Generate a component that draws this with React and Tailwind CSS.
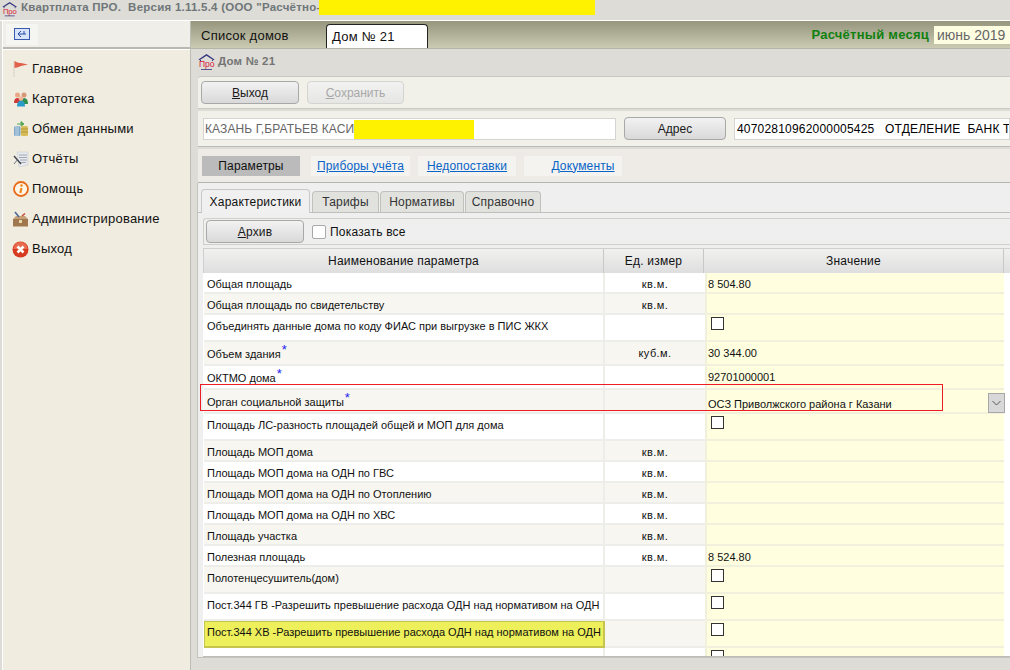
const font = { };
function Logo() {
  return (
    <svg width="17" height="18" viewBox="0 0 17 18" className="shrink-0">
      <path d="M0.5 6.5 L8.5 1 L16.5 6.5 L15.5 7.2 L8.5 2.8 L1.5 7.2 Z" fill="#33337f" />
      <path d="M2.5 7 V8 M14.5 7 V8" stroke="#33337f" />
      <text x="1" y="14" fontSize="8.5" fill="#d8203a" fontFamily="Liberation Sans, sans-serif">Про</text>
      <path d="M3 16.5 H14" stroke="#33337f" strokeWidth="0.8" />
    </svg>
  );
}
function Flag() {
  return (
    <svg width="16" height="18" viewBox="0 0 16 18">
      <path d="M1 1 V17" stroke="#d9cfc0" strokeWidth="1" />
      <path d="M1.5 1 Q5 3.5 8 3 L15 4.5 L8 6 Q5 7.5 1.5 8 Z" fill="#e0604a" />
    </svg>
  );
}
function People() {
  return (
    <svg width="16" height="16" viewBox="0 0 16 16">
      <circle cx="4.5" cy="4" r="2.5" fill="#e8a888" />
      <path d="M1 12 Q1 7 4.5 7 Q8 7 8 12 Z" fill="#d03838" />
      <circle cx="11" cy="4" r="2.5" fill="#d89878" />
      <path d="M7 13 Q7 7 11 7 Q15 7 15 13 Z" fill="#2f8f4f" />
      <path d="M4 15.5 Q4 9.5 8 9.5 Q12 9.5 12 15.5 Z" fill="#2a9ac8" />
      <circle cx="8" cy="7.5" r="2.3" fill="#f0b898" />
    </svg>
  );
}
function Exchange() {
  return (
    <svg width="16" height="16" viewBox="0 0 16 16">
      <rect x="1" y="5" width="6.5" height="10" rx="1.5" fill="#7fa8c8" />
      <path d="M3 5 V15 M5 5 V15" stroke="#c7dbe8" />
      <rect x="8" y="5" width="7" height="10" rx="1.5" fill="#d8bc58" />
      <path d="M8 8 H15 M8 11 H15" stroke="#a58a30" strokeWidth="0.7" />
      <path d="M8 0.5 L11 3 L8 5 Z M4 3 H8" fill="#58a858" stroke="#58a858" />
    </svg>
  );
}
function Reports() {
  return (
    <svg width="16" height="17" viewBox="0 0 16 17">
      <path d="M4 1 H15 V14 L6 16 Z" fill="#e8eaee" stroke="#c0c4cc" strokeWidth="0.5" />
      <path d="M6 4 H14 M6 6.5 H14 M7 9 H14 M7 11.5 H13" stroke="#8c94a4" strokeWidth="0.8" />
      <path d="M1 5 L8 13" stroke="#3c4048" strokeWidth="1.4" />
      <path d="M1 13 L5 8" stroke="#60687a" strokeWidth="0.9" />
    </svg>
  );
}
function Help() {
  return (
    <svg width="16" height="16" viewBox="0 0 16 16">
      <circle cx="8" cy="8" r="7" fill="#fff6e8" stroke="#e86a18" strokeWidth="1.8" />
      <circle cx="8.5" cy="4.5" r="1.3" fill="#f0881c" />
      <path d="M8.5 7 L7.3 12" stroke="#f0881c" strokeWidth="2.2" />
    </svg>
  );
}
function Admin() {
  return (
    <svg width="17" height="17" viewBox="0 0 17 17">
      <path d="M1 8 H16 V15.5 H1 Z" fill="#a07850" />
      <path d="M1 8 L4 5 H13 L16 8 Z" fill="#c8a078" />
      <rect x="7" y="9" width="3" height="3" fill="#e8d8a8" />
      <path d="M3 1 L7 6" stroke="#4a6a98" strokeWidth="1.6" />
      <path d="M10 5 L13 2.5" stroke="#c84838" strokeWidth="1.6" />
    </svg>
  );
}
function Quit() {
  return (
    <svg width="17" height="17" viewBox="0 0 17 17">
      <circle cx="8.5" cy="8.5" r="8" fill="#d83a20" />
      <path d="M1.5 8 A7 7 0 0 1 15.5 8 Z" fill="#e86a50" />
      <path d="M5.5 5.5 L11.5 11.5 M11.5 5.5 L5.5 11.5" stroke="#fff" strokeWidth="2.6" />
    </svg>
  );
}
const menu = [
  [Flag, "Главное"],
  [People, "Картотека"],
  [Exchange, "Обмен данными"],
  [Reports, "Отчёты"],
  [Help, "Помощь"],
  [Admin, "Администрирование"],
  [Quit, "Выход"],
];
function Btn({ children, disabled, w }) {
  return (
    <div className={`h-[23px] rounded-[4px] border flex items-center justify-center text-[12px] bg-gradient-to-b from-[#f2f2f2] to-[#d9d9d9] shrink-0 ${w} ${disabled ? "border-[#d4d4d0] text-[#a8a8a8] from-[#f0f0ee] to-[#e6e6e4]" : "border-[#a8a8a8] text-[#1a1a1a]"}`}>
      {children}
    </div>
  );
}
function Star() {
  return <span className="text-[#2222ee] text-[13px] leading-none relative -top-[6px] ml-px">*</span>;
}
function Box() {
  return <span className="block w-[13px] h-[13px] border border-[#333] bg-white ml-[3px]" />;
}
const rows = [
  { h: 21, n: "Общая площадь", u: "кв.м.", v: "8 504.80" },
  { h: 21, n: "Общая площадь по свидетельству", u: "кв.м." },
  { h: 27, n: "Объединять данные дома по коду ФИАС при выгрузке в ПИС ЖКХ", b: 1 },
  { h: 24, n: "Объем здания", s: 1, u: "куб.м.", v: "30 344.00" },
  { h: 24, n: "ОКТМО дома", s: 1, v: "92701000001" },
  { h: 24, n: "Орган социальной защиты", s: 1, v: "ОСЗ Приволжского района г Казани", sel: 1 },
  { h: 27, n: "Площадь ЛС-разность площадей общей и МОП для дома", b: 1 },
  { h: 21, n: "Площадь МОП дома", u: "кв.м." },
  { h: 21, n: "Площадь МОП дома на ОДН по ГВС", u: "кв.м." },
  { h: 21, n: "Площадь МОП дома на ОДН по Отоплению", u: "кв.м." },
  { h: 21, n: "Площадь МОП дома на ОДН по ХВС", u: "кв.м." },
  { h: 21, n: "Площадь участка", u: "кв.м." },
  { h: 21, n: "Полезная площадь", u: "кв.м.", v: "8 524.80" },
  { h: 27, n: "Полотенцесушитель(дом)", b: 1 },
  { h: 27, n: "Пост.344 ГВ -Разрешить превышение расхода ОДН над нормативом на ОДН", b: 1 },
  { h: 27, n: "Пост.344 ХВ -Разрешить превышение расхода ОДН над нормативом на ОДН", b: 1, hl: 1 },
  { h: 27, n: "", b: 1 },
];
const T = "[font-family:'DejaVu_Sans',sans-serif]";
export default function App() {
  return (
    <div className="relative w-[1010px] h-[670px] overflow-hidden flex flex-col bg-[#dddcd6] text-[#111] [font-family:'Liberation_Sans',Arial,sans-serif]">
      <div className="h-5 shrink-0 flex items-start">
        <div className="ml-[2px] mt-[1px] scale-90 origin-top-left w-[18px]"><Logo /></div>
        <span className="ml-[1px] text-[11.5px] font-bold leading-[15px] text-[#6f7679] whitespace-pre tracking-[0.24px] w-[298px] overflow-hidden">Квартплата ПРО.  Версия 1.11.5.4 (ООО "Расчётно-и</span>
        <div className="w-[276px] h-[15px] bg-[#fff200]" />
      </div>
      <div className="flex-1 flex min-h-0 border-t border-white">
        <aside className="w-[189px] shrink-0 ml-[2px] border-l border-white flex flex-col border-r border-r-[#bdbdb5]">
          <div className="h-[28px] shrink-0 bg-[#f0eee8] border-b-2 border-[#b8b8b0] flex items-center pl-[3px]">
            <div className="w-[32px] h-[21px] bg-[#f5f5f2] flex items-center justify-center">
              <svg width="16" height="12" viewBox="0 0 16 12">
                <rect x="0.5" y="0.5" width="15" height="11" fill="#d8e4fa" stroke="#3a5ab0" />
                <path d="M7 3 L4 6 L7 9 M4 6 H12 M10 3 V6" fill="none" stroke="#2848a8" />
              </svg>
            </div>
          </div>
          <nav className="flex-1 bg-[#f0ece0] border-t border-white pt-[4px] flex flex-col">
            {menu.map(([I, t]) => (
              <div key={t} className="h-[30px] flex items-center pl-[7px] text-[13px]">
                <span className="w-[23px] flex justify-center shrink-0 -ml-[1px]"><I /></span>
                <span className="tracking-[0.22px]">{t}</span>
              </div>
            ))}
          </nav>
        </aside>
        <main className="flex-1 min-w-0 flex flex-col relative">
          <div className="h-[28px] shrink-0 bg-gradient-to-b from-[#96967e] to-[#cbcbb3] border-b border-[#b4b4a8] flex items-end pl-[10px] relative">
            <div className="w-[125px] h-[24px] flex items-center shrink-0 text-[13px] tracking-[0.25px]">
              Список домов
            </div>
            <div className="w-[102px] h-[24px] bg-white border border-[#222] border-b-0 rounded-t-[4px] flex items-center pl-[5px] text-[13px] tracking-[0.25px] justify-between pr-[4px] shrink-0">
              Дом № 21
            </div>
            <div className="ml-auto self-center flex items-center">
              <span className="text-[13px] font-bold text-[#108010] tracking-[0.25px]">Расчётный месяц</span>
              <span className="ml-[5px] w-[76px] h-[18px] bg-[#fdfde2] text-[14px] text-[#666] pl-[3px] leading-[19px] whitespace-nowrap">июнь 2019</span>
            </div>
          </div>
          <div className="flex-1 min-h-0 flex flex-col pl-[7px]">
            <div className="h-[28px] shrink-0 flex items-center gap-[3px] -mt-px">
              <Logo />
              <span className="text-[11.5px] font-bold text-[#747474] tracking-[0.2px]">Дом № 21</span>
            </div>
            <div className="h-[33px] shrink-0 bg-[#f1f1ea] border-t border-b border-[#c8c8c2] rounded-tl-[3px] flex items-center pl-[3px] gap-[8px]">
              <Btn w="w-[98px]"><span><u>В</u>ыход</span></Btn>
              <Btn w="w-[97px]" disabled><span><u>С</u>охранить</span></Btn>
            </div>
            <div className="h-[36px] shrink-0 bg-[#f1f1ea] border-b border-[#bcbcb6] mt-[2px] flex items-center pl-[5px]">
              <div className="w-[413px] h-[22px] bg-white border border-[#d4d4d0] flex items-center pl-[1px] text-[12px] text-[#666] shrink-0 tracking-[0.1px] overflow-hidden">
                КАЗАНЬ Г,БРАТЬЕВ КАСИ
                <span className="w-[120px] h-[19px] bg-[#fff200] mt-[1px] shrink-0" />
              </div>
              <div className="w-[8px] shrink-0" />
              <Btn w="w-[102px]">Адрес</Btn>
              <div className="w-[8px] shrink-0" />
              <div className="flex-1 h-[22px] bg-white border border-[#d4d4d0] pl-[2px] text-[12px] leading-[20px] whitespace-pre overflow-hidden tracking-[0.2px] text-black">40702810962000005425   ОТДЕЛЕНИЕ  БАНК ТАТАРСТАН</div>
            </div>
            <div className="h-[34px] shrink-0 mt-[2px] bg-[#eeebe6] border-b border-[#b4b4ae] flex items-center pl-[4px] text-[12px] tracking-[0.15px]">
              <div className="w-[98px] h-[20px] bg-[#bbbbbb] flex items-center justify-center shrink-0">Параметры</div>
              <div className="ml-[11px] w-[99px] h-[20px] bg-[#f4f3ef] flex items-center justify-center text-[#0a64c8] underline shrink-0">Приборы учёта</div>
              <div className="ml-[8px] w-[98px] h-[20px] bg-[#f4f3ef] flex items-center justify-center text-[#0a64c8] underline shrink-0">Недопоставки</div>
              <div className="ml-[8px] w-[98px] h-[20px] bg-[#f4f3ef] flex items-center justify-center text-[#0a64c8] underline shrink-0 pl-[20px]">Документы</div>
            </div>
            <div className="flex-1 min-h-0 flex flex-col bg-[#efefef] border-l border-[#c4c4be] ml-[-1px] mb-[12px] border-b">
              <div className="h-[27px] shrink-0 flex items-end pl-[3px] border-b border-[#c0c0ba] text-[12px] tracking-[0.2px] mt-[3px]">
                <div className="w-[109px] h-[24px] bg-[#f0f0f0] border border-[#c8c8c4] border-b-0 rounded-t-[4px] flex items-center justify-center relative top-px">Характеристики</div>
                <div className="ml-[2px] w-[67px] h-[21px] bg-[#e1e1de] border border-[#c0c0bc] border-b-0 rounded-t-[4px] flex items-center justify-center text-[#333]">Тарифы</div>
                <div className="ml-px w-[84px] h-[21px] bg-[#e1e1de] border border-[#c0c0bc] border-b-0 rounded-t-[4px] flex items-center justify-center text-[#333]">Нормативы</div>
                <div className="ml-px w-[76px] h-[21px] bg-[#e1e1de] border border-[#c0c0bc] border-b-0 rounded-t-[4px] flex items-center justify-center text-[#333]">Справочно</div>
              </div>
              <div className="flex-1 min-h-0 flex flex-col pl-[5px] pt-[5px]">
                <div className="h-[27px] shrink-0 border-t border-b border-l border-[#d0d0ca] rounded-tl-[3px] flex items-center pl-[2px] text-[12px] tracking-[0.2px]">
                  <Btn w="w-[98px]"><span><u>А</u>рхив</span></Btn>
                  <span className="ml-[8px] w-[14px] h-[14px] rounded-[2px] border border-[#a8a8a8] bg-white shrink-0" />
                  <span className="ml-[4px]">Показать все</span>
                </div>
                <div className="flex-1 min-h-0 mt-[3px] overflow-hidden bg-white border-b border-[#bdbdb7] flex flex-col">
                  <div className="h-[25px] shrink-0 flex bg-gradient-to-b from-[#f1f1f0] to-[#dedede] text-[12px] tracking-[0.2px] border-t border-[#cfcfcf] border-l">
                    <div className="w-[400px] border-r border-[#c8c8c8] flex items-center justify-center">Наименование параметра</div>
                    <div className="w-[100px] border-r border-[#c8c8c8] flex items-center justify-center">Ед. измер</div>
                    <div className="w-[300px] border-r border-[#c8c8c8] flex items-center justify-center">Значение</div>
                  </div>
                  {rows.map((r, i) => {
                    const alt = i % 2 === 1;
                    return (
                      <div key={i} className={`shrink-0 flex text-[11px] ${alt ? "" : ""}`} style={{ height: r.h }}>
                        <div className={`w-[401px] shrink-0 pl-[3px] border-b-2 border-r-2 border-[#ededea] flex ${r.s ? "items-end pb-[2px]" : "items-start pt-[3px]"} whitespace-nowrap ${r.hl ? "bg-[#edef5b] border !border-[#c4c44f] !pl-[2px] !pt-[2px]" : alt ? "bg-[#f7f6f0]" : "bg-white"} ml-[1px]`}>
                          <span>{r.n}</span>{r.s ? <Star /> : null}
                        </div>
                        <div className={`w-[100px] shrink-0 border-b-2 border-[#ededea] flex justify-center pt-[3px] tracking-[0.4px] ${alt ? "bg-[#f7f6f0]" : "bg-white"}`}>{r.u}</div>
                        <div className={`w-[299px] shrink-0 border-b-2 border-l-2 border-[#f1f0dd] bg-[#ffffe0] pl-[1px] ${r.b ? "pt-[2px]" : r.sel ? "pt-[6px]" : "pt-[3px]"} whitespace-nowrap relative`}>
                          {r.b ? <Box /> : r.v}
                          {r.sel ? (
                            <span className="absolute -right-[1px] top-[3px] w-[17px] h-[20px] bg-[#d8d8d8] border border-[#a8a8a8] flex items-center justify-center">
                              <svg width="9" height="6" viewBox="0 0 9 6"><path d="M0.5 1 L4.5 5 L8.5 1" fill="none" stroke="#555" /></svg>
                            </span>
                          ) : null}
                        </div>
                      </div>
                    );
                  })}
                </div>
              </div>
            </div>
          </div>
        </main>
      </div>
      <div className="absolute left-[200px] top-[384px] w-[743px] h-[27px] border border-[#ee1c25]" />
    </div>
  );
}
